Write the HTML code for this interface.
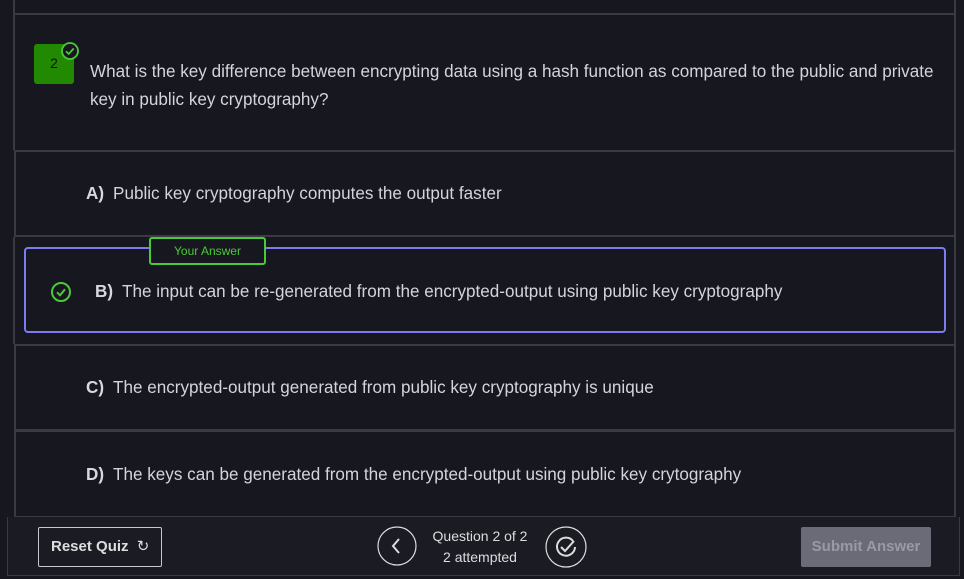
<!DOCTYPE html>
<html><head><style>
body{margin:0;width:964px;height:579px;background:#16171f;font-family:"Liberation Sans",sans-serif;color:#d0d0d6;position:relative;overflow:hidden}
.a{position:absolute;box-sizing:border-box}
.opt{border:2px solid #3a3b42;left:14px;width:942px}
.txt{position:absolute;font-size:17.1px;color:#d4d4da;white-space:nowrap}
.txt b{font-weight:bold;margin-right:9px;color:#d8d8de}
</style></head><body>
<div class="a" style="left:13px;top:0;width:2px;height:150px;background:#3a3b42"></div>
<div class="a" style="left:954px;top:0;width:2px;height:150px;background:#3a3b42"></div>
<div class="a" style="left:13px;top:13px;width:943px;height:2px;background:#3a3b42"></div>
<div class="a" style="left:34px;top:44px;width:40px;height:40px;background:#218a02;border-radius:3px;color:#111;font-size:14px;text-align:center;line-height:38px">2</div>
<svg class="a" style="left:60px;top:41px" width="20" height="20" viewBox="0 0 20 20"><circle cx="10" cy="10" r="8" fill="#16171f" stroke="#4cc93a" stroke-width="1.8"/><path d="M6 10.3l2.7 2.7 5-5.5" fill="none" stroke="#4cc93a" stroke-width="1.8"/></svg>
<div class="a" style="left:90px;top:58px;font-size:17.1px;line-height:28px;color:#d4d4da;width:845px">What is the key difference between encrypting data using a hash function as compared to the public and private key in public key cryptography?</div>
<div class="a opt" style="top:150px;height:87px"></div>
<div class="txt" style="left:86px;top:184px"><b>A)</b>Public key cryptography computes the output faster</div>
<div class="a" style="left:13px;top:237px;width:2px;height:107px;background:#3a3b42"></div>
<div class="a" style="left:954px;top:237px;width:2px;height:107px;background:#3a3b42"></div>
<div class="a" style="left:24px;top:247px;width:922px;height:86px;border:2px solid #7c7cf0;border-radius:4px"></div>
<div class="a" style="left:149px;top:237px;width:117px;height:28px;border:2px solid #4cc93a;border-radius:3px;background:#16171f;color:#4cc93a;font-size:12px;text-align:center;line-height:24px">Your Answer</div>
<svg class="a" style="left:50px;top:281px" width="22" height="22" viewBox="0 0 22 22"><circle cx="11" cy="11" r="9" fill="none" stroke="#4cc93a" stroke-width="2"/><path d="M7 11.3l3 3 5-6" fill="none" stroke="#4cc93a" stroke-width="2"/></svg>
<div class="txt" style="left:95px;top:282px"><b>B)</b>The input can be re-generated from the encrypted-output using public key cryptography</div>
<div class="a opt" style="top:344px;height:87px"></div>
<div class="txt" style="left:86px;top:378px"><b>C)</b>The encrypted-output generated from public key cryptography is unique</div>
<div class="a opt" style="top:430px;height:88px"></div>
<div class="txt" style="left:86px;top:465px"><b>D)</b>The keys can be generated from the encrypted-output using public key crytography</div>
<div class="a" style="left:7px;top:517px;width:953px;height:59px;border:1px solid #3a3b42;border-top:none;background:#1a1b23"></div>
<div class="a" style="left:38px;top:527px;width:124px;height:40px;border:1px solid #c8c8c8;border-radius:2px;color:#ddd;font-weight:bold;font-size:15px;line-height:38px;padding-left:12px">Reset Quiz <span style="font-weight:normal;margin-left:4px">↻</span></div>
<svg class="a" style="left:377px;top:526px" width="40" height="40" viewBox="0 0 40 40"><circle cx="20" cy="20" r="19" fill="none" stroke="#ddd" stroke-width="1.2"/><path d="M22 13l-6 7 6 7" fill="none" stroke="#ddd" stroke-width="2"/></svg>
<div class="a" style="left:420px;top:526px;width:120px;text-align:center;font-size:14px;line-height:21px;color:#ddd">Question 2 of 2<br>2 attempted</div>
<svg class="a" style="left:545px;top:526px" width="42" height="42" viewBox="0 0 42 42"><circle cx="21" cy="21" r="20" fill="none" stroke="#ddd" stroke-width="1.2"/><path d="M28 15a9 9 0 1 0 2 6" fill="none" stroke="#ddd" stroke-width="2"/><path d="M16 21l4 4 9-10" fill="none" stroke="#ddd" stroke-width="2"/></svg>
<div class="a" style="left:801px;top:527px;width:130px;height:40px;background:#6b6b78;border-radius:2px;color:#9a9aa6;font-weight:bold;font-size:15px;text-align:center;line-height:40px">Submit Answer</div>
</body></html>
